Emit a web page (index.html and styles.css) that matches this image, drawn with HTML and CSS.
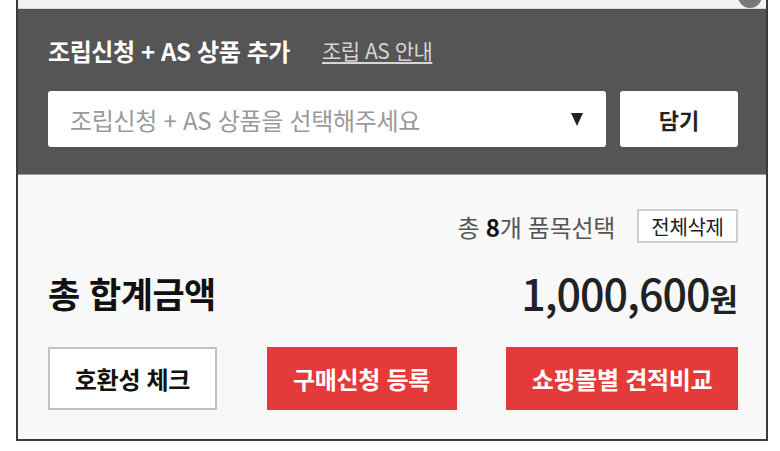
FILE: index.html
```html
<!DOCTYPE html>
<html lang="ko">
<head>
<meta charset="UTF-8">
<meta name="viewport" content="width=device-width, initial-scale=1.0">
<title>조립신청 + AS 상품 추가</title>
<link rel="stylesheet" href="styles.css">
</head>
<body>
    <div class="cart-box">
        <div class="top-strip">
            <span class="scroll-dot"></span>
        </div>

        <div class="as-panel">
            <div class="as-head">
                <h2 class="as-title">조립신청 + AS 상품 추가</h2>
                <a class="as-guide" href="#">조립 AS 안내</a>
            </div>
            <div class="as-row">
                <div class="as-select">
                    <span class="as-placeholder">조립신청 + AS 상품을 선택해주세요</span>
                    <span class="as-arrow"></span>
                </div>
                <button type="button" class="as-add">담기</button>
            </div>
        </div>

        <div class="summary">
            <div class="count-row">
                <span class="count-text">총 <b>8</b>개 품목선택</span>
                <button type="button" class="btn-clear">전체삭제</button>
            </div>
            <div class="total-row">
                <span class="total-label">총 합계금액</span>
                <span class="total-price">1,000,600<small>원</small></span>
            </div>
            <div class="action-row">
                <button type="button" class="btn btn-white btn-check">호환성 체크</button>
                <button type="button" class="btn btn-red btn-buy">구매신청 등록</button>
                <button type="button" class="btn btn-red btn-compare">쇼핑몰별 견적비교</button>
            </div>
        </div>
    </div>
</body>
</html>
```

FILE: styles.css
```css
body {
    margin: 0;
    padding: 0;
    background-color: #ffffff;
    font-family: "Noto Sans CJK KR", "Noto Sans", sans-serif;
    color: #222222;
}

button {
    font-family: inherit;
    cursor: pointer;
}

.cart-box {
    width: 748px;
    margin-left: 16px;
    border: 2px solid #3a3a3a;
    border-top: none;
}

.top-strip {
    position: relative;
    height: 8px;
    background-color: #f3f2f1;
    border-bottom: 1px solid #d8d8d8;
    overflow: hidden;
}

.scroll-dot {
    position: absolute;
    right: 4px;
    top: -16px;
    width: 24px;
    height: 24px;
    border-radius: 50%;
    background-color: #777777;
}

.as-panel {
    background-color: #555555;
    padding: 26px 28px 27px 30px;
    border-bottom: 1px solid #9a9a9a;
}

.as-head {
    display: flex;
    align-items: center;
    height: 30px;
    margin-bottom: 26px;
}

.as-title {
    margin: 0;
    font-size: 24px;
    font-weight: bold;
    color: #ffffff;
    letter-spacing: -0.4px;
}

.as-guide {
    margin-left: 32px;
    font-size: 21px;
    color: #d6d6d6;
    letter-spacing: -0.5px;
    text-decoration: underline;
    text-underline-offset: 3px;
}

.as-row {
    display: flex;
    justify-content: space-between;
}

.as-select {
    display: flex;
    align-items: center;
    justify-content: space-between;
    box-sizing: border-box;
    width: 558px;
    height: 56px;
    padding: 0 23px 0 22px;
    background-color: #ffffff;
    border-radius: 3px;
}

.as-placeholder {
    font-size: 24px;
    color: #9a9a9a;
    letter-spacing: -0.3px;
}

.as-arrow {
    width: 0;
    height: 0;
    border-left: 6px solid transparent;
    border-right: 6px solid transparent;
    border-top: 13px solid #222222;
}

.as-add {
    width: 118px;
    height: 56px;
    border: none;
    border-radius: 3px;
    background-color: #ffffff;
    font-size: 22px;
    font-weight: bold;
    color: #222222;
}

.summary {
    background-color: #f8f8f8;
    padding: 34px 28px 29px 30px;
}

.count-row {
    display: flex;
    justify-content: flex-end;
    align-items: center;
    height: 34px;
}

.count-text {
    font-size: 24px;
    color: #555555;
    letter-spacing: -0.3px;
}

.count-text b {
    color: #111111;
}

.btn-clear {
    box-sizing: border-box;
    width: 101px;
    height: 34px;
    margin-left: 22px;
    padding: 0;
    border: 2px solid #cfcfcf;
    background-color: #ffffff;
    font-size: 20px;
    color: #222222;
    letter-spacing: -0.3px;
}

.total-row {
    display: flex;
    justify-content: space-between;
    align-items: center;
    height: 50px;
    margin-top: 24px;
}

.total-label {
    font-size: 35px;
    font-weight: bold;
    color: #111111;
    letter-spacing: -0.5px;
}

.total-price {
    font-size: 43px;
    font-weight: 500;
    color: #222222;
    letter-spacing: -1px;
}

.total-price small {
    font-size: 31px;
    font-weight: bold;
    letter-spacing: 0;
}

.action-row {
    display: flex;
    justify-content: space-between;
    margin-top: 30px;
}

.btn {
    box-sizing: border-box;
    height: 63px;
    padding: 0;
    font-size: 24px;
    font-weight: bold;
    letter-spacing: -0.3px;
}

.btn-white {
    border: 2px solid #c2c2c2;
    background-color: #ffffff;
    color: #111111;
}

.btn-red {
    border: none;
    background-color: #e53a3a;
    color: #ffffff;
}

.btn-check {
    width: 169px;
}

.btn-buy {
    width: 190px;
}

.btn-compare {
    width: 232px;
}
```
